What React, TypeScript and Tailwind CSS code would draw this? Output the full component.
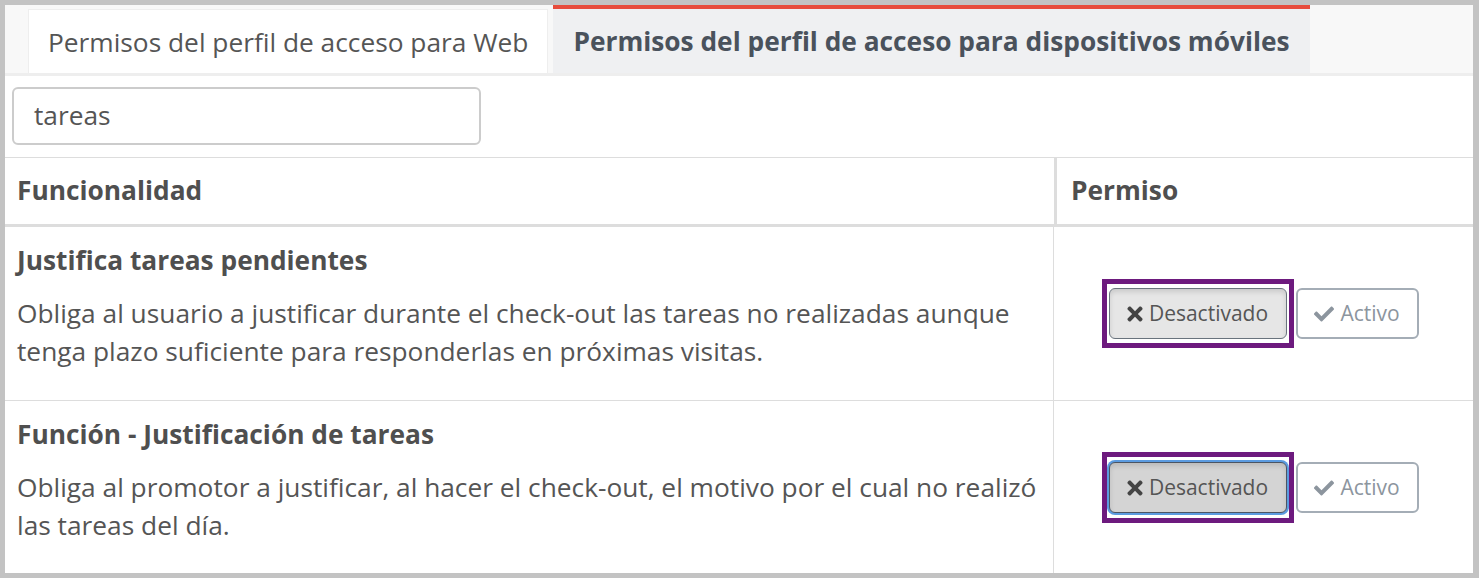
import React from "react";
import { FaTimes, FaCheck } from "react-icons/fa";

const font = { fontFamily: '"Open Sans", "Noto Sans", sans-serif' };

function Buttons({ focused }: { focused?: boolean }) {
  return (
    <div className="flex items-center">
      <div
        className={
          "border-[5px] border-[#6d1a7e] bg-white " + (focused ? "px-[2px] py-[5px]" : "px-[2px] py-[4px]")
        }
      >
        <button
          className={
            "flex h-[51px] w-[178px] items-center justify-center gap-[6px] rounded-[6px] border text-[21px] text-[#555] shadow-[inset_0_3px_5px_rgba(0,0,0,0.12)] " +
            (focused ? "bg-[#d4d4d4] border-[#4b5563] ring-2 ring-[#5b9be0]" : "bg-[#e6e6e6] border-[#69737d]")
          }
        >
          <FaTimes className="h-[22px] w-[16px] text-[#444]" />
          <span>Desactivado</span>
        </button>
      </div>
      <button className="ml-[2px] flex h-[51px] w-[123px] items-center justify-center gap-[6px] rounded-[6px] border-2 border-[#a4adb6] bg-white text-[21px] text-[#8c959e]">
        <FaCheck className="h-[20px] w-[20px] text-[#8c959e]" />
        <span>Activo</span>
      </button>
    </div>
  );
}

function Row({ title, lines, focused }: { title: string; lines: string[]; focused?: boolean }) {
  return (
    <div className="grid grid-cols-[1049px_1fr] border-b border-[#dddddd]">
      <div className="pl-[12px] pr-[12px] pt-[16px] pb-[30px] border-r border-[#dddddd]">
        <div className="text-[26.3px] font-bold leading-[34px] text-[#4f4f4f]">{title}</div>
        <div className="mt-[17px] text-[26.3px] leading-[38px] text-[#555]">
          {lines.map((l, i) => (
            <div key={i} className="whitespace-nowrap">{l}</div>
          ))}
        </div>
      </div>
      <div className="flex items-center justify-center pr-[7px]">
        <Buttons focused={focused} />
      </div>
    </div>
  );
}

export default function App() {
  return (
    <div
      style={font}
      className="h-[578px] w-[1479px] overflow-hidden border-t-[5px] border-l-[5px] border-r-[6px] border-b-[5px] border-[#c3c3c3] bg-white"
    >
      <div className="flex h-[71px] items-end gap-[5px] border-b-[3px] border-[#eeeeee] bg-[#f8f8f8] pl-[23px]">
        <div className="flex h-[64px] items-center border border-b-0 border-[#eeeeee] bg-white px-[19px] pt-[2px] text-[26.3px] text-[#555]">
          Permisos del perfil de acceso para Web
        </div>
        <div className="flex h-[68px] items-center border-t-[4px] border-[#e74c3c] bg-[#eff0f2] px-[20px] pt-[2px] text-[26.3px] font-bold text-[#4a525c]">
          Permisos del perfil de acceso para dispositivos móviles
        </div>
      </div>
      <div className="px-[7px] pt-[11px]">
        <div className="flex h-[58px] w-[469px] items-center rounded-[6px] border-2 border-[#cccccc] px-[20px] text-[26.3px] text-[#555]">
          tareas
        </div>
      </div>
      <div className="mt-[12px] border-t border-[#dddddd]">
        <div className="grid h-[69px] grid-cols-[1049px_1fr] border-b-[3px] border-[#dddddd]">
          <div className="flex items-center pl-[12px] text-[26.3px] font-bold text-[#4f4f4f]">Funcionalidad</div>
          <div className="flex items-center border-l-[3px] border-[#dddddd] pl-[14px] text-[26.3px] font-bold text-[#4f4f4f]">
            Permiso
          </div>
        </div>
        <Row
          title="Justifica tareas pendientes"
          lines={[
            "Obliga al usuario a justificar durante el check-out las tareas no realizadas aunque",
            "tenga plazo suficiente para responderlas en próximas visitas.",
          ]}
        />
        <Row
          title="Función - Justificación de tareas"
          lines={[
            "Obliga al promotor a justificar, al hacer el check-out, el motivo por el cual no realizó",
            "las tareas del día.",
          ]}
          focused
        />
      </div>
    </div>
  );
}
